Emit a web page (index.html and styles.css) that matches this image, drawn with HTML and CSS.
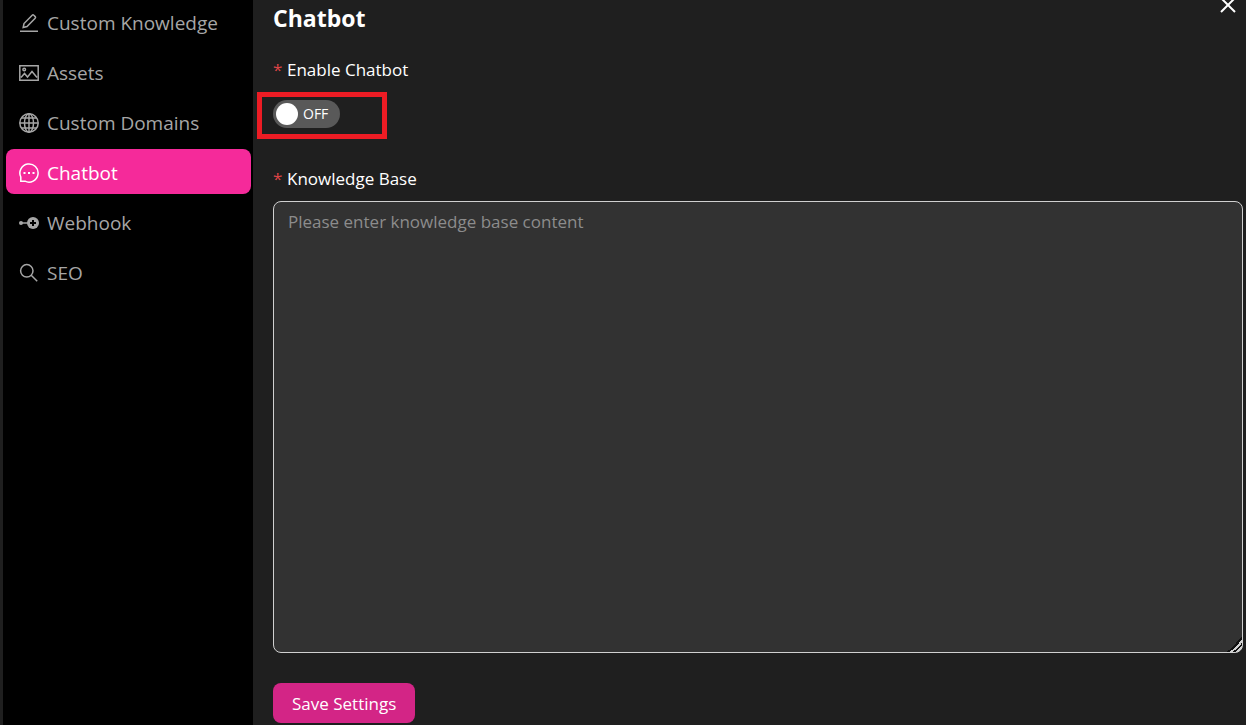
FILE: index.html
```html
<!DOCTYPE html>
<html lang="en">
<head>
  <meta charset="UTF-8">
  <title>Chatbot Settings</title>
  <meta name="viewport" content="width=device-width, initial-scale=1">
  <link rel="stylesheet" href="styles.css">
</head>
<body>
  <div class="settings">
    <nav class="sidebar">
      <a class="menu-item" href="#knowledge">
        <svg class="icon" viewBox="0 0 20 20"><path d="M1 18.2h18M4.200 14.500l.8-4L13.200 2.200q.8-.8 1.600 0l1.400 1.400q.8.8 0 1.600L8 13.500z"/></svg>
        Custom Knowledge
      </a>
      <a class="menu-item" href="#assets">
        <svg class="icon" viewBox="0 0 20 20"><path d="M.8 2.800h18.400v14.400H.8zM2 14.500l3.500-4 3 3.500L13 8.500l5 6"/><circle cx="5.200" cy="6.500" r="1.300"/></svg>
        Assets
      </a>
      <a class="menu-item" href="#domains">
        <svg class="icon" viewBox="0 0 20 20"><circle cx="10" cy="10" r="9.200"/><ellipse cx="10" cy="10" rx="4.500" ry="9.200"/><path d="M10 .8v18.400M.8 10h18.400M2.500 5h15M2.500 15h15"/></svg>
        Custom Domains
      </a>
      <a class="menu-item active" href="#chatbot" aria-current="page">
        <svg class="icon" viewBox="0 0 20 20"><path d="M1.800 18.200V14A9.100 9.100 0 1 1 6 18.200z"/><path class="solid" d="M4.500 9h2v2h-2zM9 9h2v2H9zM13.500 9h2v2h-2z"/></svg>
        Chatbot
      </a>
      <a class="menu-item" href="#webhook">
        <svg class="icon" viewBox="0 0 20 20"><path d="M2 10h7"/><circle class="solid" cx="2" cy="10" r="2"/><circle class="solid" cx="14" cy="10" r="6"/><path class="plus" d="M11 10h6M14 7v6"/></svg>
        Webhook
      </a>
      <a class="menu-item" href="#seo">
        <svg class="icon" viewBox="0 0 20 20"><circle cx="7.800" cy="7.800" r="6.200"/><path d="M12.200 12.200l6 6"/></svg>
        SEO
      </a>
    </nav>
    <main class="content">
      <header class="content-header">
        <h1>Chatbot</h1>
        <button class="close" type="button" aria-label="Close">
          <svg class="close-icon" viewBox="0 0 16 16"><path d="M1 1l14 14M15 1L1 15"/></svg>
        </button>
      </header>
      <form class="chatbot-form">
        <label class="field-label" for="enableChatbot"><span class="required">*</span>Enable Chatbot</label>
        <div class="switch-row">
          <label class="switch">
            <input type="checkbox" role="switch" id="enableChatbot">
            <span class="switch-text">OFF</span>
          </label>
          <div class="highlight"></div>
        </div>
        <label class="field-label" for="knowledgeBase"><span class="required">*</span>Knowledge Base</label>
        <textarea id="knowledgeBase" placeholder="Please enter knowledge base content"></textarea>
        <button class="save" type="submit">Save Settings</button>
      </form>
    </main>
  </div>
</body>
</html>
```
FILE: styles.css
```css
* {
  box-sizing: border-box;
}
body {
  margin: 0;
  background: #1f1f1f;
  color: #fff;
  font-family: 'Open Sans', 'Noto Sans', sans-serif;
}
.settings {
  display: flex;
  min-height: 100vh;
  padding-left: 3px;
}

/* Sidebar */
.sidebar {
  display: flex;
  flex-direction: column;
  gap: 5px;
  width: 250px;
  flex-shrink: 0;
  margin-top: -1px;
  padding: 0 2px 0 3px;
  background: #000;
}
.menu-item {
  display: flex;
  align-items: center;
  gap: 8px;
  height: 45px;
  padding: 2px 13px 0;
  border-radius: 8px;
  color: #a6a6a6;
  font-size: 19px;
  text-decoration: none;
  white-space: nowrap;
}
.menu-item.active {
  background: #f52a9a;
  color: #fff;
}
.icon {
  width: 20px;
  height: 20px;
  flex-shrink: 0;
  fill: none;
  stroke: currentColor;
  stroke-width: 1.5;
}
.icon .solid {
  fill: currentColor;
  stroke: none;
}
.icon .plus {
  stroke: #000;
  stroke-width: 2;
}

/* Content */
.content {
  display: flex;
  flex-direction: column;
  flex: 1;
  min-width: 0;
  padding: 0 3px 2px 20px;
}
.content-header {
  display: flex;
  justify-content: space-between;
  align-items: flex-start;
  height: 54px;
}
h1 {
  margin: 0;
  font-size: 23px;
  font-weight: 700;
  line-height: 36px;
}
.close {
  padding: 0;
  margin: -3px 7px 0 0;
  border: none;
  background: none;
  color: #fff;
  line-height: 0;
  cursor: pointer;
}
.close-icon {
  width: 16px;
  height: 16px;
  fill: none;
  stroke: currentColor;
  stroke-width: 2;
}
.chatbot-form {
  display: flex;
  flex-direction: column;
  align-items: flex-start;
  flex: 1;
}
.field-label {
  font-size: 17px;
  line-height: 32px;
}
.required {
  display: inline-block;
  width: 14px;
  color: #dc4446;
}
.switch-row {
  position: relative;
  padding: 14px 0 35px;
}
.switch {
  display: flex;
  align-items: center;
  width: 67px;
  height: 28px;
  padding: 0 3px;
  gap: 5px;
  border-radius: 14px;
  background: #595959;
  cursor: pointer;
}
.switch input {
  width: 22px;
  height: 22px;
  margin: 0;
  appearance: none;
  border-radius: 50%;
  background: #fff;
  cursor: pointer;
}
.switch-text {
  font-size: 14px;
  line-height: 28px;
}
.highlight {
  position: absolute;
  top: 6px;
  left: -16px;
  width: 130px;
  height: 47px;
  border: 5px solid #ed1c24;
  pointer-events: none;
}
textarea {
  flex: 1;
  width: 100%;
  min-height: 200px;
  margin: 6px 0 30px;
  padding: 5px 14px;
  border: 1px solid #d0d0d0;
  border-radius: 8px;
  background: #323232;
  color: #fff;
  font-family: inherit;
  font-size: 17px;
  line-height: 30px;
  resize: vertical;
  color-scheme: dark;
}
textarea::placeholder {
  color: #8c8c8c;
}
textarea::-webkit-resizer {
  background: linear-gradient(135deg, transparent 50%, #111 50%, #111 60%, #d0d0d0 60%, #d0d0d0 70%, #111 70%, #111 78%, #d0d0d0 78%, #d0d0d0 88%, transparent 88%);
}
.save {
  height: 40px;
  padding: 0 19px;
  border: none;
  border-radius: 8px;
  background: #d32586;
  color: #fff;
  font-family: inherit;
  font-size: 17px;
  cursor: pointer;
}
```
